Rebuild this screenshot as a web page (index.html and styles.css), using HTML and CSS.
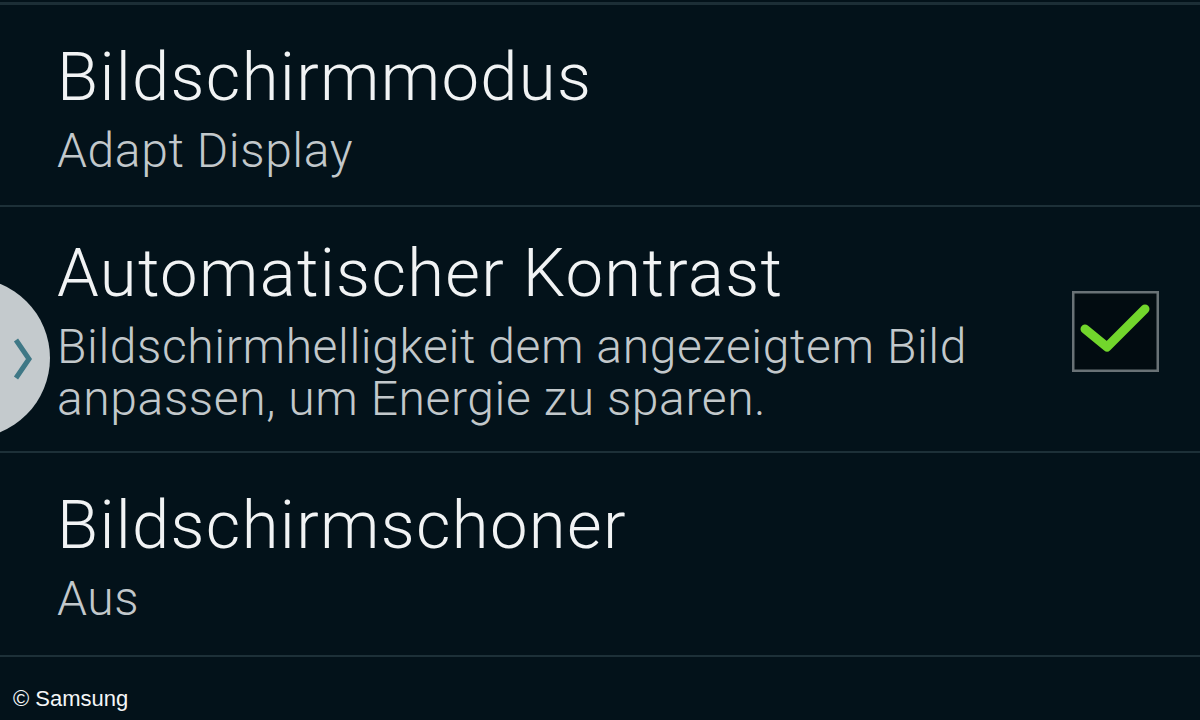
FILE: index.html
```html
<!DOCTYPE html>
<html lang="de">
<head>
<meta charset="utf-8">
<title>Anzeige</title>
<link rel="stylesheet" href="styles.css">
</head>
<body>
<div class="screen">
  <ul class="settings">
    <li class="row">
      <div class="text">
        <div class="title">Bildschirmmodus</div>
        <div class="sub">Adapt Display</div>
      </div>
    </li>
    <li class="row row-check">
      <div class="text">
        <div class="title">Automatischer Kontrast</div>
        <div class="sub">Bildschirmhelligkeit dem angezeigtem Bild<br>anpassen, um Energie zu sparen.</div>
      </div>
      <div class="checkbox">
        <svg width="87" height="81" viewBox="0 0 87 81">
          <rect x="1.25" y="1.25" width="84.5" height="78.5" fill="#020c11" stroke="#697276" stroke-width="2.5"/>
          <path d="M13 38 L35 56 L73 18" fill="none" stroke="#72d62c" stroke-width="9" stroke-linecap="round" stroke-linejoin="round"/>
        </svg>
      </div>
    </li>
    <li class="row">
      <div class="text">
        <div class="title">Bildschirmschoner</div>
        <div class="sub">Aus</div>
      </div>
    </li>
  </ul>
  <div class="credit">© Samsung</div>
  <div class="side-tab">
    <svg width="40" height="60" viewBox="0 0 40 60">
      <path d="M16 10 L29 29 L16 48" fill="none" stroke="#3f7886" stroke-width="5" stroke-linecap="butt" stroke-linejoin="miter"/>
    </svg>
  </div>
</div>
</body>
</html>
```

FILE: styles.css
```css
html, body {
  margin: 0;
  padding: 0;
  background: #03121a;
}

.screen {
  position: relative;
  width: 1200px;
  height: 720px;
  overflow: hidden;
  background: #03121a;
  padding-top: 2px;
  box-sizing: border-box;
  font-family: Roboto, "Noto Sans", sans-serif;
}

.settings {
  list-style: none;
  margin: 0;
  padding: 0;
  border-top: 3px solid #1c2e36;
}

.row {
  display: flex;
  align-items: center;
  justify-content: space-between;
  padding: 36px 41px 28px 57px;
  border-bottom: 2px solid #1d3038;
}

.row-check {
  padding-top: 30px;
  padding-bottom: 26px;
}

.row:last-child {
  padding-bottom: 30px;
}

.title {
  font-size: 67px;
  font-weight: 300;
  line-height: 72px;
  letter-spacing: 1.3px;
  color: #f1f3f4;
  white-space: nowrap;
}

.sub {
  margin-top: 12px;
  font-size: 48px;
  font-weight: 300;
  line-height: 52px;
  letter-spacing: 0.6px;
  color: #c2c8cb;
  white-space: nowrap;
}

.checkbox {
  display: flex;
  width: 87px;
  height: 81px;
}

.credit {
  margin-top: 29px;
  padding-left: 13px;
  font-family: "Liberation Sans", Arial, sans-serif;
  font-size: 22px;
  line-height: 26px;
  color: #f4f6f7;
}

.side-tab {
  position: absolute;
  left: -110px;
  top: 278px;
  width: 160px;
  height: 160px;
  border-radius: 50%;
  background: #c4cacd;
}

.side-tab svg {
  position: absolute;
  left: 110px;
  top: 52px;
}
```
